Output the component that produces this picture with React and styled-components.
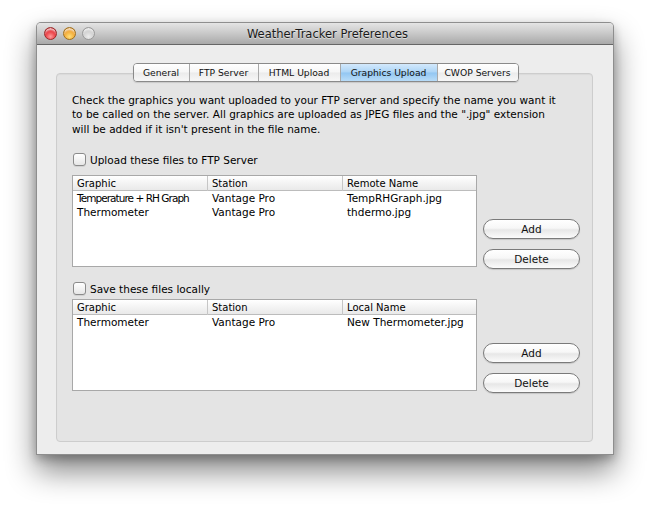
import React from "react";
import styled, { createGlobalStyle } from "styled-components";

const Global = createGlobalStyle`
  html, body { margin: 0; padding: 0; background: #ffffff; }
  body {
    width: 650px; height: 506px; overflow: hidden;
    font-family: "Lucida Grande", "DejaVu Sans", sans-serif;
    color: #000;
  }
  * { box-sizing: border-box; }
`;

const Stage = styled.div`
  padding: 22px 0 0 36px;
`;

const Window = styled.div`
  width: 578px;
  height: 433px;
  display: flex;
  flex-direction: column;
  background: #ededed;
  border: 1px solid rgba(0, 0, 0, 0.4);
  border-radius: 5px 5px 0 0;
  box-shadow: 0 16px 30px rgba(0, 0, 0, 0.48), 0 4px 10px rgba(0, 0, 0, 0.24);
`;

const TitleBar = styled.div`
  height: 22px;
  display: grid;
  grid-template-columns: 1fr auto 1fr;
  align-items: center;
  padding-left: 7px;
  border-radius: 4px 4px 0 0;
  background: linear-gradient(#e4e4e4 0%, #cbcbcb 45%, #a9a9a9 100%);
  border-bottom: 1px solid #666;
`;

const Lights = styled.div`
  display: flex;
  gap: 6px;
  align-items: center;
`;

const Light = styled.span`
  width: 13px;
  height: 13px;
  border-radius: 50%;
  border: 1px solid ${(p) => p.$edge};
  background: radial-gradient(circle at 50% 78%, ${(p) => p.$glow} 0%, ${(p) => p.$base} 55%, ${(p) => p.$dark} 100%);
  box-shadow: inset 0 3px 2px -1px rgba(255, 255, 255, 0.75);
`;

const Title = styled.div`
  font-size: 11.5px;
  color: #1a1a1a;
  text-shadow: 0 1px 0 rgba(255, 255, 255, 0.5);
  white-space: nowrap;
  padding-right: 2px;
`;

const Content = styled.div`
  flex: 1;
  display: flex;
  flex-direction: column;
  padding: 18px 20px 12px 19px;
`;

const TabBar = styled.div`
  position: relative;
  z-index: 1;
  align-self: center;
  display: flex;
  margin: 0 0 -9px 2px;
  height: 19px;
  border: 1px solid #8a8a8a;
  border-radius: 4px;
  overflow: hidden;
  box-shadow: 0 1px 1px rgba(0, 0, 0, 0.12);
`;

const Tab = styled.div`
  width: ${(p) => p.$w}px;
  display: flex;
  align-items: center;
  justify-content: center;
  font-size: 9.2px;
  color: #111;
  white-space: nowrap;
  border-left: ${(p) => (p.$first ? "none" : "1px solid #a9a9a9")};
  background: ${(p) =>
    p.$active
      ? "linear-gradient(#d3e9fc 0%, #acd4f6 48%, #92c6f2 52%, #b8dcf8 100%)"
      : "linear-gradient(#ffffff 0%, #f6f6f6 48%, #ebebeb 52%, #f7f7f7 100%)"};
`;

const Group = styled.div`
  flex: 1;
  display: flex;
  flex-direction: column;
  padding: 19px 12px 0 15px;
  background: #e4e4e4;
  border: 1px solid #cdcdcd;
  border-radius: 4px;
  box-shadow: inset 0 1px 1px rgba(0, 0, 0, 0.04);
`;

const Intro = styled.div`
  font-size: 10.5px;
  line-height: 14.3px;
  white-space: nowrap;
`;

const Line = styled.div``;

const Section = styled.div`
  display: flex;
  flex-direction: column;
  gap: ${(p) => p.$gap}px;
  margin-top: ${(p) => p.$top}px;
`;

const CheckRow = styled.label`
  display: flex;
  align-items: center;
  gap: 4px;
  padding-left: 1px;
  height: 14px;
  font-size: 10.5px;
`;

const Box = styled.span`
  width: 13px;
  height: 13px;
  border: 1px solid #8b8b8b;
  border-radius: 3px;
  background: linear-gradient(#ffffff 0%, #f3f3f3 50%, #e6e6e6 100%);
  box-shadow: 0 1px 0 rgba(0, 0, 0, 0.08);
`;

const Row = styled.div`
  display: flex;
  gap: 6px;
  align-items: flex-end;
`;

const Table = styled.div`
  flex: 1;
  height: 92px;
  background: #fff;
  border: 1px solid #a8a8a8;
`;

const Grid = styled.div`
  display: grid;
  grid-template-columns: 134px 135px 1fr;
`;

const Head = styled(Grid)`
  height: 15px;
  background: linear-gradient(#ffffff 0%, #f4f4f4 50%, #e9e9e9 100%);
  border-bottom: 1px solid #bcbcbc;
`;

const HeadCell = styled.div`
  font-size: 10px;
  line-height: 15px;
  padding-left: 4px;
  border-left: ${(p) => (p.$first ? "none" : "1px solid #c6c6c6")};
  white-space: nowrap;
`;

const Cell = styled.div`
  font-size: 10.5px;
  line-height: 14px;
  padding-left: ${(p) => (p.$first ? 4 : 5)}px;
  white-space: nowrap;
  letter-spacing: ${(p) => (p.$tight ? "-0.95px" : "0")};
`;

const Buttons = styled.div`
  width: 97px;
  display: flex;
  flex-direction: column;
  gap: 10px;
  margin-bottom: -2px;
`;

const Button = styled.button`
  height: 20px;
  width: 100%;
  padding: 0;
  font-family: inherit;
  font-size: 10.5px;
  color: #111;
  border: 1px solid #7a7a7a;
  border-radius: 10px;
  background: linear-gradient(#ffffff 0%, #f7f7f7 45%, #e7e7e7 55%, #fbfbfb 100%);
  box-shadow: 0 1px 1px rgba(0, 0, 0, 0.14);
`;

const tabs = [
  { label: "General", w: 55 },
  { label: "FTP Server", w: 69 },
  { label: "HTML Upload", w: 82 },
  { label: "Graphics Upload", w: 97, active: true },
  { label: "CWOP Servers", w: 81 },
];

function FileTable({ nameHeader, rows }) {
  return (
    <Table>
      <Head>
        <HeadCell $first>Graphic</HeadCell>
        <HeadCell>Station</HeadCell>
        <HeadCell>{nameHeader}</HeadCell>
      </Head>
      {rows.map((r, i) => (
        <Grid key={i}>
          <Cell $first $tight={r.tight}>{r.graphic}</Cell>
          <Cell>{r.station}</Cell>
          <Cell>{r.name}</Cell>
        </Grid>
      ))}
    </Table>
  );
}

function FileSection({ label, top, gap, nameHeader, rows }) {
  return (
    <Section $top={top} $gap={gap}>
      <CheckRow>
        <Box />
        {label}
      </CheckRow>
      <Row>
        <FileTable nameHeader={nameHeader} rows={rows} />
        <Buttons>
          <Button>Add</Button>
          <Button>Delete</Button>
        </Buttons>
      </Row>
    </Section>
  );
}

export default function App() {
  return (
    <>
      <Global />
      <Stage>
        <Window>
          <TitleBar>
            <Lights>
              <Light $edge="#9b2a2a" $base="#e8343a" $dark="#a8141c" $glow="#ff9b9b" />
              <Light $edge="#a0701c" $base="#f2a531" $dark="#c0731a" $glow="#ffe07a" />
              <Light $edge="#9a9a9a" $base="#cfcfcf" $dark="#b3b3b3" $glow="#ececec" />
            </Lights>
            <Title>WeatherTracker Preferences</Title>
            <span />
          </TitleBar>
          <Content>
            <TabBar>
              {tabs.map((t, i) => (
                <Tab key={t.label} $w={t.w} $first={i === 0} $active={t.active}>
                  {t.label}
                </Tab>
              ))}
            </TabBar>
            <Group>
              <Intro>
                <Line>Check the graphics you want uploaded to your FTP server and specify the name you want it</Line>
                <Line>to be called on the server. All graphics are uploaded as JPEG files and the ".jpg" extension</Line>
                <Line>will be added if it isn't present in the file name.</Line>
              </Intro>
              <FileSection
                label="Upload these files to FTP Server"
                top={17}
                gap={8}
                nameHeader="Remote Name"
                rows={[
                  { graphic: "Temperature + RH Graph", station: "Vantage Pro", name: "TempRHGraph.jpg", tight: true },
                  { graphic: "Thermometer", station: "Vantage Pro", name: "thdermo.jpg" },
                ]}
              />
              <FileSection
                label="Save these files locally"
                top={15}
                gap={3}
                nameHeader="Local Name"
                rows={[{ graphic: "Thermometer", station: "Vantage Pro", name: "New Thermometer.jpg" }]}
              />
            </Group>
          </Content>
        </Window>
      </Stage>
    </>
  );
}
